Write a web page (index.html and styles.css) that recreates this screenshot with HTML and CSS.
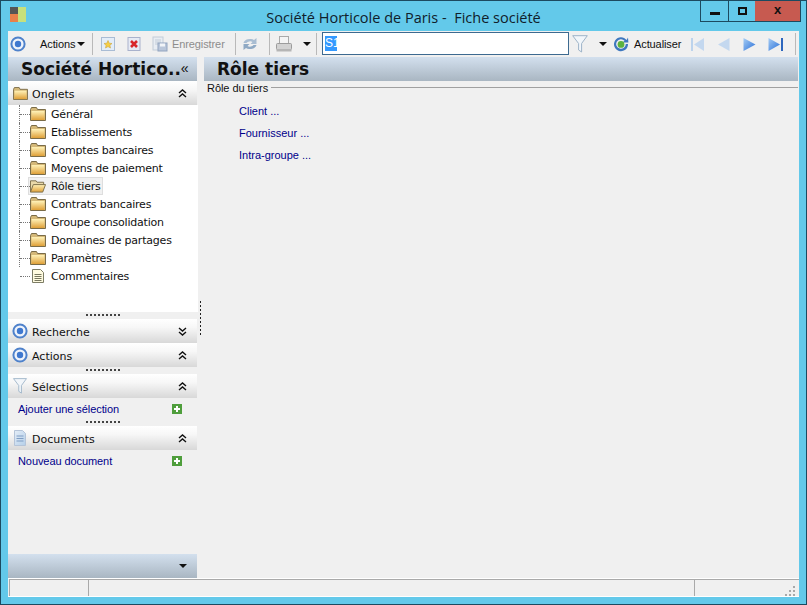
FILE: index.html
```html
<!DOCTYPE html>
<html lang="fr">
<head>
<meta charset="utf-8">
<title>Société Horticole de Paris - Fiche société</title>
<link rel="stylesheet" href="styles.css">
</head>
<body>
<svg class="defs" width="0" height="0" aria-hidden="true">
  <defs>
    <linearGradient id="fg" x1="0" y1="0" x2="0" y2="1"><stop offset="0" stop-color="#fff2b8"/><stop offset="1" stop-color="#dfa038"/></linearGradient>
    <linearGradient id="blueg" x1="0" y1="0" x2="1" y2="1"><stop offset="0" stop-color="#a6cdf5"/><stop offset="1" stop-color="#2a70d8"/></linearGradient>
    <linearGradient id="blueg2" x1="0" y1="0" x2="1" y2="1"><stop offset="0" stop-color="#e4edf7"/><stop offset="1" stop-color="#b4cfe9"/></linearGradient>
    <symbol id="folder" viewBox="0 0 16 14">
      <path d="M.5 2.5 V13.5 H15.5 V2.5 H7.5 L6.5 .5 H1.5 Z" fill="#d4b878" stroke="#7a6c48"/>
      <rect x="1.5" y="4" width="13" height="9" fill="url(#fg)"/>
    </symbol>
    <symbol id="folderopen" viewBox="0 0 17 14">
      <path d="M.5 13.5 V1.5 H6.5 L7.5 3 H14.5 V5.5" fill="#e9d9a9" stroke="#7a6c48"/>
      <path d="M.5 13.5 L3.5 5.5 H16.5 L13.5 13.5 Z" fill="url(#fg)" stroke="#7a6c48"/>
    </symbol>
    <symbol id="target" viewBox="0 0 16 16">
      <circle cx="8" cy="8" r="6.6" fill="#eef3fb" stroke="#4f82cb" stroke-width="2"/>
      <circle cx="8" cy="8" r="3.2" fill="#3f78cf"/>
    </symbol>
    <symbol id="funnel" viewBox="0 0 16 18">
      <path d="M.7 .7 H15.3 L9.6 8.5 V17 L6.6 15 V8.5 Z" fill="#f2f6fa" stroke="#9db3c8"/>
    </symbol>
    <symbol id="chevup" viewBox="0 0 9 9">
      <path d="M1 4 L4.5 1 L8 4 M1 8 L4.5 5 L8 8" fill="none" stroke="#111" stroke-width="1.4"/>
    </symbol>
    <symbol id="chevdown" viewBox="0 0 9 9">
      <path d="M1 1 L4.5 4 L8 1 M1 5 L4.5 8 L8 5" fill="none" stroke="#111" stroke-width="1.4"/>
    </symbol>
    <symbol id="plus" viewBox="0 0 10 10">
      <rect width="10" height="10" fill="#4f9e3c"/>
      <path d="M2 5 H8 M5 2 V8" stroke="#fff" stroke-width="2"/>
    </symbol>
  </defs>
</svg>

<div class="window">
  <header class="titlebar">
    <svg class="app-icon" width="16" height="16" viewBox="0 0 16 16" aria-hidden="true">
      <rect x="0" width="8" height="7" fill="#555"/><rect x="0" y="7" width="8" height="8" fill="#e8804a"/><rect x="8" width="8" height="15" fill="#c7e07c"/>
    </svg>
    <div class="title">Société Horticole de Paris -&nbsp; Fiche société</div>
    <div class="winbtns">
      <div class="winbtn btn-min"><span class="glyph-min"></span></div>
      <div class="winbtn btn-max"><span class="glyph-max"></span></div>
      <div class="winbtn btn-close">x</div>
    </div>
  </header>

  <div class="client">
    <div class="toolbar">
      <svg class="ic16 tb-target"><use href="#target"/></svg>
      <span class="tb-text tb-actions">Actions</span><span class="arrow tb-a1"></span>
      <span class="sep sep1"></span>
      <svg class="ic16 tb-new" viewBox="0 0 16 16"><rect x="1.5" y="1.5" width="13" height="13" fill="#e3edf8" stroke="#a9bcd4"/><path d="M8 4.5 L9.2 7.2 L12 7.5 L9.9 9.3 L10.5 12 L8 10.6 L5.5 12 L6.1 9.3 L4 7.5 L6.8 7.2 Z" fill="#f6cf45" stroke="#c89a2b" stroke-width=".5"/></svg>
      <svg class="ic16 tb-del" viewBox="0 0 16 16"><rect x="2" y="1.5" width="12" height="13" fill="#e6eaf4" stroke="#a9b2cc"/><path d="M5 5 L11 11 M11 5 L5 11" stroke="#d8262a" stroke-width="2.6"/></svg>
      <svg class="ic16 tb-save" viewBox="0 0 16 16"><rect x="1" y="1" width="10" height="13" fill="#e8edf3" stroke="#c2ccd8"/><path d="M3 4H9M3 6H9M3 8H6" stroke="#c2ccd8"/><rect x="6" y="7" width="9" height="8" fill="#b9c6da" stroke="#92a4bf"/><rect x="8" y="7.5" width="5" height="3" fill="#f1f4f8"/></svg>
      <span class="tb-text tb-disabled tb-save-t">Enregistrer</span>
      <span class="sep sep2"></span>
      <svg class="ic16 tb-refresh" viewBox="0 0 16 16"><path d="M1.5 7 A6.5 5 0 0 1 12 4 L14.5 2 V8 H8.5 L10.5 6 A4 3 0 0 0 4.5 7 Z" fill="#a9bdd2"/><path d="M14.5 9 A6.5 5 0 0 1 4 12 L1.5 14 V8 H7.5 L5.5 10 A4 3 0 0 0 11.5 9 Z" fill="#8fa9c4"/></svg>
      <span class="sep sep3"></span>
      <svg class="tb-print" width="18" height="18" viewBox="0 0 18 18"><rect x="4.5" y="1.5" width="9" height="7" fill="#f4f4f4" stroke="#a9a9a9"/><rect x="1.5" y="8.5" width="15" height="6" rx="1" fill="#d2d2d2" stroke="#9c9c9c"/><rect x="1.5" y="14" width="15" height="2.5" fill="#b5b5b5"/></svg>
      <span class="arrow tb-a2"></span>
      <span class="sep sep4"></span>
      <div class="search"><span class="sel">S1</span></div>
      <svg class="tb-funnel" width="16" height="18"><use href="#funnel"/></svg>
      <span class="arrow tb-a3"></span>
      <svg class="ic16 tb-reload" viewBox="0 0 16 16"><path d="M13.6 4 A7 7 0 1 0 15 8 H12.8 A4.8 4.8 0 1 1 11.6 4.8 L9.6 6.4 L15.4 6.6 L15 1.6 Z" fill="#3f78bf"/><circle cx="8" cy="8.4" r="3.4" fill="#5cb23f"/></svg>
      <span class="tb-text tb-act">Actualiser</span>
      <svg class="nav nav-first" width="15" height="15" viewBox="0 0 15 15"><rect x="1" y="1" width="2" height="13" fill="#bcd3ec"/><path d="M14 1 L4 7.5 L14 14 Z" fill="#c4d8ef"/></svg>
      <svg class="nav nav-prev" width="13" height="15" viewBox="0 0 13 15"><path d="M12.5 1 L1 7.5 L12.5 14 Z" fill="#c4d8ef"/></svg>
      <svg class="nav nav-next" width="13" height="15" viewBox="0 0 13 15"><path d="M.5 1 L12.5 7.5 L.5 14 Z" fill="url(#blueg)"/></svg>
      <svg class="nav nav-last" width="16" height="15" viewBox="0 0 16 15"><path d="M.5 1 L12 7.5 L.5 14 Z" fill="url(#blueg)"/><rect x="13" y="1" width="2" height="13" fill="#2d66bd"/></svg>
      <span class="sep sep5"></span>
    </div>

    <div class="main">
      <aside class="sidebar">
        <div class="band side-title"><span>Société Hortico..</span><span class="dbl">«</span></div>

        <div class="sec-head">
          <svg class="sec-folder"><use href="#folder"/></svg>
          <span class="sec-label">Onglets</span>
          <svg class="chev"><use href="#chevup"/></svg>
        </div>
        <ul class="tree">
          <li><svg class="ti"><use href="#folder"/></svg><span class="tl">Général</span></li>
          <li><svg class="ti"><use href="#folder"/></svg><span class="tl">Etablissements</span></li>
          <li><svg class="ti"><use href="#folder"/></svg><span class="tl">Comptes bancaires</span></li>
          <li><svg class="ti"><use href="#folder"/></svg><span class="tl">Moyens de paiement</span></li>
          <li class="selected"><span class="selbox"><svg class="ti"><use href="#folderopen"/></svg><span class="tl">Rôle tiers</span></span></li>
          <li><svg class="ti"><use href="#folder"/></svg><span class="tl">Contrats bancaires</span></li>
          <li><svg class="ti"><use href="#folder"/></svg><span class="tl">Groupe consolidation</span></li>
          <li><svg class="ti"><use href="#folder"/></svg><span class="tl">Domaines de partages</span></li>
          <li><svg class="ti"><use href="#folder"/></svg><span class="tl">Paramètres</span></li>
          <li><svg class="ti" viewBox="0 0 16 14"><path d="M2.5 .5 H10.5 L13.5 3.5 V13.5 H2.5 Z" fill="#fffbe0" stroke="#7d7d66"/><path d="M4.5 5.5H11.5M4.5 7.5H11.5M4.5 9.5H11.5M4.5 11.5H11.5" stroke="#77775f"/></svg><span class="tl">Commentaires</span></li>
        </ul>
        <div class="grip"></div>

        <div class="sec-head">
          <svg class="sec-ic"><use href="#target"/></svg>
          <span class="sec-label">Recherche</span>
          <svg class="chev"><use href="#chevdown"/></svg>
        </div>
        <div class="sec-head">
          <svg class="sec-ic"><use href="#target"/></svg>
          <span class="sec-label">Actions</span>
          <svg class="chev"><use href="#chevup"/></svg>
        </div>
        <div class="grip"></div>

        <div class="sec-head">
          <svg class="sec-ic"><use href="#funnel"/></svg>
          <span class="sec-label">Sélections</span>
          <svg class="chev"><use href="#chevup"/></svg>
        </div>
        <div class="linkrow"><a class="lnk">Ajouter une sélection</a><svg class="plus"><use href="#plus"/></svg></div>
        <div class="grip"></div>

        <div class="sec-head">
          <svg class="sec-ic" viewBox="0 0 16 16"><path d="M2.5 .5 H10.5 L13.5 3.5 V15.5 H2.5 Z" fill="url(#blueg2)" stroke="#b5c4d8"/><path d="M4.5 6H11.5M4.5 8.5H11.5M4.5 11H11.5" stroke="#7f9dc4"/></svg>
          <span class="sec-label">Documents</span>
          <svg class="chev"><use href="#chevup"/></svg>
        </div>
        <div class="linkrow"><a class="lnk">Nouveau document</a><svg class="plus"><use href="#plus"/></svg></div>

        <div class="side-fill"></div>
        <div class="band side-foot"><span class="arrow"></span></div>
      </aside>

      <div class="splitter"><span class="split-dots"></span></div>

      <section class="content">
        <div class="band page-title">Rôle tiers</div>
        <div class="group">
          <div class="legend"><span>Rôle du tiers</span><span class="rule"></span></div>
          <ul class="links">
            <li><a class="lnk">Client ...</a></li>
            <li><a class="lnk">Fournisseur ...</a></li>
            <li><a class="lnk">Intra-groupe ...</a></li>
          </ul>
        </div>
      </section>
    </div>

    <footer class="status">
      <span class="cell cell1"></span>
      <span class="cell cell2"></span>
      <span class="cell cell3"><svg class="sizer" width="11" height="11" viewBox="0 0 11 11"><path d="M8 1h2v2H8zM4 5h2v2H4zM8 5h2v2H8zM0 9h2v2H0zM4 9h2v2H4zM8 9h2v2H8z" fill="#a8a8a8"/></svg></span>
    </footer>
  </div>
</div>
</body>
</html>
```

FILE: styles.css
```css
* { box-sizing: border-box; }
html, body { margin: 0; padding: 0; }
body { width: 807px; height: 605px; overflow: hidden; font-family: "DejaVu Sans", sans-serif; }
.defs { position: absolute; }
ul { list-style: none; margin: 0; padding: 0; }

.window {
  width: 807px; height: 605px;
  background: #63c9ea;
  border: 1px solid #1c4a60;
  display: flex; flex-direction: column;
}

/* title bar */
.titlebar { height: 30px; display: flex; align-items: flex-start; position: relative; flex: none; }
.app-icon { margin: 6px 0 0 9px; }
.title {
  position: absolute; left: 0; right: 0; top: 7px;
  text-align: center; font: 14.5px "Open Sans", sans-serif; color: #10202a;
}
.winbtns { margin-left: auto; margin-right: 5px; display: flex; height: 21px; position: relative; border-left: 1px solid #1c4a60; border-right: 1px solid #1c4a60; border-bottom: 1px solid #1c4a60; }
.winbtn { height: 20px; display: flex; align-items: center; justify-content: center; }
.btn-min { width: 28px; border-right: 1px solid #1c4a60; }
.btn-max { width: 26px; }
.btn-close { width: 45px; background: #c75a50; color: #111; font: bold 13px "Liberation Sans", sans-serif; padding-bottom: 3px; }
.glyph-min { width: 10px; height: 3px; background: #111; margin-top: 5px; }
.glyph-max { width: 9px; height: 8px; border: 2px solid #111; }

.client {
  margin: 0 7px 7px;
  flex: 1; min-height: 0;
  background: #f0f0f0;
  display: flex; flex-direction: column;
}

/* toolbar */
.toolbar { height: 26px; display: flex; align-items: center; flex: none; }
.ic16 { width: 16px; height: 16px; flex: none; }
.tb-text { font: 11px "Liberation Sans", sans-serif; color: #111; letter-spacing: -.1px; }
.tb-disabled { color: #8d8d8d; }
.arrow { width: 0; height: 0; border-left: 4px solid transparent; border-right: 4px solid transparent; border-top: 4px solid #111; flex: none; }
.sep { width: 1px; height: 22px; background: #b9b9b9; flex: none; }
.tb-target { margin-left: 2px; }
.tb-actions { margin-left: 14px; width: 35px; }
.tb-a1 { margin-left: 2px; }
.sep1 { margin-left: 7px; }
.tb-new { margin-left: 7px; }
.tb-del { margin-left: 10px; }
.tb-save { margin-left: 10px; }
.tb-save-t { margin-left: 4px; width: 55px; }
.sep2 { margin-left: 8px; }
.tb-refresh { margin-left: 6px; }
.sep3 { margin-left: 11px; }
.tb-print { margin-left: 5px; }
.tb-a2 { margin-left: 10px; }
.sep4 { margin-left: 5px; }
.search {
  margin: 0 0 1px 5px; width: 247px; height: 23px;
  background: #fff; border: 1px solid #3d6a90;
  padding: 3px 2px;
  font: 12px/15px "Liberation Sans", sans-serif; color: #fff;
}
.sel { background: #3399ff; display: inline-block; width: 12px; height: 15px; }
.tb-funnel { margin-left: 3px; }
.tb-a3 { margin-left: 11px; }
.tb-reload { margin-left: 6px; }
.tb-act { margin-left: 5px; width: 48px; }
.nav-first { margin-left: 8px; }
.nav-prev { margin-left: 12px; }
.nav-next { margin-left: 13px; }
.nav-last { margin-left: 12px; }
.sep5 { margin-left: 11px; }

/* main */
.main { flex: 1; min-height: 0; display: flex; }
.sidebar { width: 189px; flex: none; display: flex; flex-direction: column; }
.band { height: 24px; flex: none; background: linear-gradient(#d3e0ee, #a9b6c2); color: #111; }
.side-title {
  font: bold 17px/24px "DejaVu Sans", sans-serif;
  padding-left: 13px; display: flex; justify-content: space-between;
  padding-right: 10px; white-space: nowrap;
}
.dbl { font: 14px/22px "Liberation Sans", sans-serif; }

.sec-head {
  height: 24px; flex: none;
  background: linear-gradient(#fff, #f7f7f7 35%, #d8d8d8);
  display: flex; align-items: center; font: 11px "DejaVu Sans", sans-serif; color: #111;
}
.sec-folder { width: 15px; height: 13px; margin-left: 5px; }
.sec-ic { width: 16px; height: 16px; margin-left: 4px; flex: none; }
.sec-label { margin-left: 4px; flex: 1; padding-top: 2px; }
.chev { width: 9px; height: 9px; margin-right: 10px; }

.tree { height: 207px; background: #fff; flex: none; padding-left: 11px; margin-right: -1px; }
.tree li {
  height: 18px; display: flex; align-items: center;
  border-left: 1px dotted #777;
  padding-left: 10px; position: relative;
}
.tree li::before {
  content: ""; position: absolute; left: 0; width: 10px; top: 9px;
  border-top: 1px dotted #777;
}
.tree li:last-child { border-left-color: transparent; }
.ti { width: 16px; height: 14px; flex: none; }
.tl { margin-left: 5px; font: 11px "DejaVu Sans", sans-serif; color: #111; white-space: nowrap; letter-spacing: -.2px; }
.selbox { display: flex; align-items: center; height: 18px; background: #f1f1f1; border: 1px solid #dedede; margin-left: -2px; padding: 0 1px 0 1px; }

.grip {
  height: 7px; flex: none; background: #f0f0f0;
  display: flex; justify-content: center; position: relative;
}
.grip::before {
  content: ""; width: 34px; height: 2px; margin-top: 2px;
  background: repeating-linear-gradient(90deg, #444 0 2px, transparent 2px 4px);
}
.linkrow { height: 21px; flex: none; display: flex; align-items: center; padding-left: 10px; background: #f0f0f0; }
.lnk { font: 11px "Liberation Sans", sans-serif; color: #00008b; }
.linkrow .lnk { flex: 1; letter-spacing: -.08px; }
.plus { width: 10px; height: 10px; margin-right: 15px; }
.side-fill { flex: 1; }
.side-foot { display: flex; align-items: center; justify-content: flex-end; padding-right: 10px; }

.splitter { width: 7px; flex: none; position: relative; }
.split-dots {
  position: absolute; left: 3px; top: 244px; width: 1px; height: 34px;
  background: repeating-linear-gradient(#222 0 2px, transparent 2px 4px);
}

.content { flex: 1; min-width: 0; }
.page-title { font: bold 17px/24px "DejaVu Sans", sans-serif; padding-left: 13px; margin-right: 1px; }
.group { padding: 0 1px 0 3px; }
.legend { display: flex; align-items: center; height: 14px; font: 11px "Liberation Sans", sans-serif; color: #111; letter-spacing: -.05px; }
.rule { flex: 1; height: 1px; background: #a0a0a0; margin-left: 3px; margin-top: -1px; }
.links { padding: 4px 0 0 32px; }
.links li { height: 22px; line-height: 22px; }

/* status */
.status {
  height: 19px; flex: none; display: flex;
  border-top: 1px solid #fff;
  border-bottom: 1px solid #fff;
  background: #f0f0f0;
}
.cell { border-top: 1px solid #a9a9a9; }
.cell1 { width: 80px; margin-left: 1px; border-left: 1px solid #a9a9a9; border-right: 1px solid #a9a9a9; }
.cell2 { flex: 1; border-right: 1px solid #a9a9a9; }
.cell3 { width: 104px; display: flex; justify-content: flex-end; align-items: flex-end; padding-right: 3px; }
```
